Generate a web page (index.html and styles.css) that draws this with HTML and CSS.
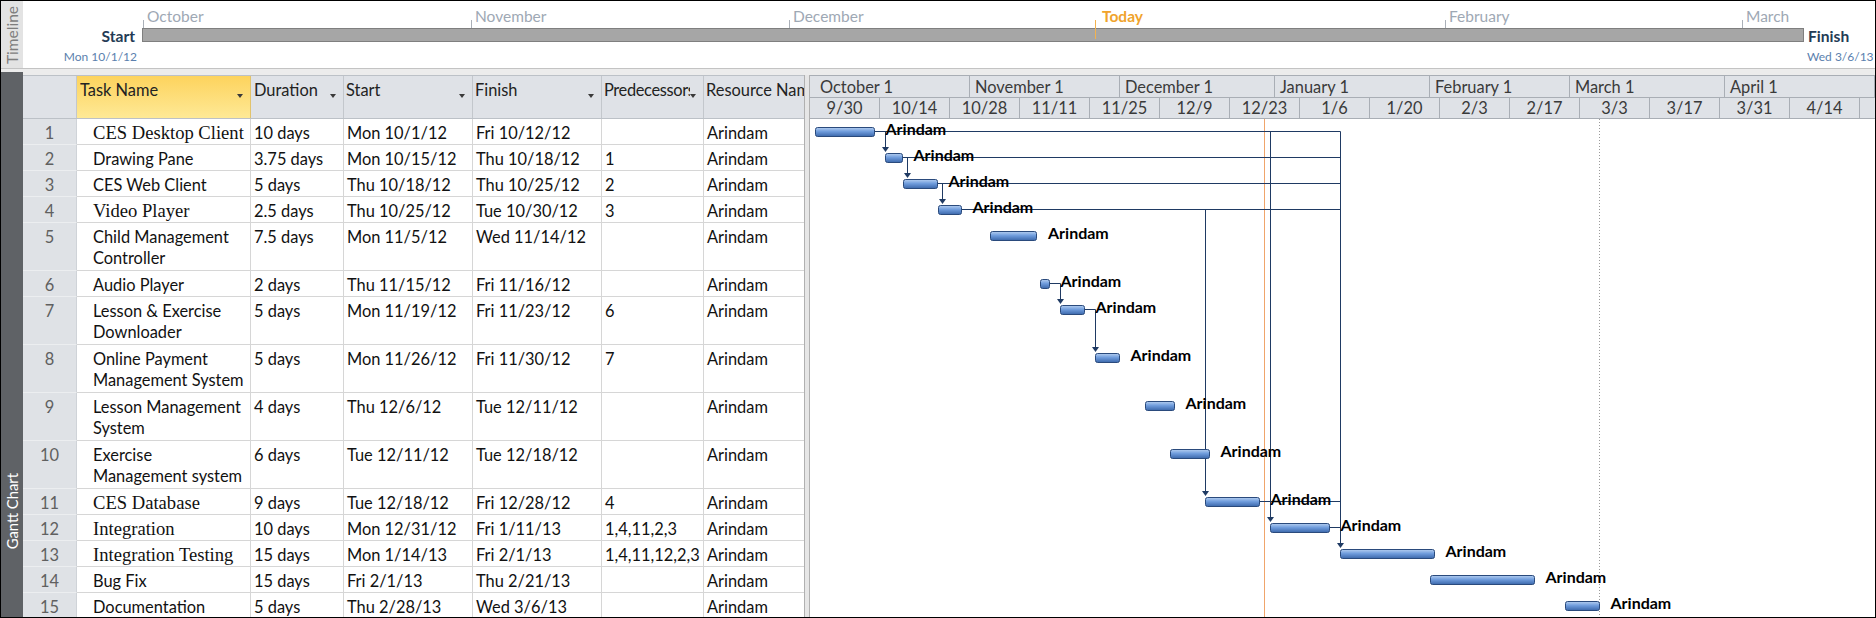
FILE: index.html
```html
<!DOCTYPE html>
<html>
<head>
<meta charset="utf-8">
<title>Gantt Chart</title>
<link rel="stylesheet" href="styles.css">
</head>
<body>
<div class="app">
  <div class="timeline">
    <div class="tl-side"><span>Timeline</span></div>
    <div class="tl-main">
      <div class="tl-months">
        <div class="tl-month" style="left:1px"><span>October</span></div>
        <div class="tl-month" style="left:329px"><span>November</span></div>
        <div class="tl-month" style="left:647px"><span>December</span></div>
        <div class="tl-month today" style="left:953px"><span>Today</span></div>
        <div class="tl-month" style="left:1303px"><span>February</span></div>
        <div class="tl-month" style="left:1600px"><span>March</span></div>
      </div>
      <div class="tl-start">Start</div>
      <div class="tl-bar"></div>
      <div class="tl-finish">Finish</div>
      <div class="tl-sdate">Mon 10/1/12</div>
      <div class="tl-fdate">Wed 3/6/13</div>
    </div>
  </div>
  <div class="sep"></div>
  <div class="gantt">
    <div class="g-side"><span>Gantt Chart</span></div>
    <div class="g-main">
      <div class="grid">
        <div class="thead">
          <div class="hc c-id"></div>
          <div class="hc c-name sel"><span class="ht">Task Name</span><i class="dd"></i></div>
          <div class="hc c-dur"><span class="ht">Duration</span><i class="dd"></i></div>
          <div class="hc c-start"><span class="ht">Start</span><i class="dd"></i></div>
          <div class="hc c-fin"><span class="ht">Finish</span><i class="dd"></i></div>
          <div class="hc c-pred"><span class="ht">Predecessors</span><i class="dd"></i></div>
          <div class="hc c-res"><span class="ht">Resource Names</span></div>
        </div>
        <div class="trow"><div class="tc c-id">1</div><div class="tc c-name serif">CES Desktop Client</div><div class="tc c-dur">10 days</div><div class="tc c-start">Mon 10/1/12</div><div class="tc c-fin">Fri 10/12/12</div><div class="tc c-pred"></div><div class="tc c-res">Arindam</div></div>
        <div class="trow"><div class="tc c-id">2</div><div class="tc c-name">Drawing Pane</div><div class="tc c-dur">3.75 days</div><div class="tc c-start">Mon 10/15/12</div><div class="tc c-fin">Thu 10/18/12</div><div class="tc c-pred">1</div><div class="tc c-res">Arindam</div></div>
        <div class="trow"><div class="tc c-id">3</div><div class="tc c-name">CES Web Client</div><div class="tc c-dur">5 days</div><div class="tc c-start">Thu 10/18/12</div><div class="tc c-fin">Thu 10/25/12</div><div class="tc c-pred">2</div><div class="tc c-res">Arindam</div></div>
        <div class="trow"><div class="tc c-id">4</div><div class="tc c-name serif">Video Player</div><div class="tc c-dur">2.5 days</div><div class="tc c-start">Thu 10/25/12</div><div class="tc c-fin">Tue 10/30/12</div><div class="tc c-pred">3</div><div class="tc c-res">Arindam</div></div>
        <div class="trow tall"><div class="tc c-id">5</div><div class="tc c-name">Child Management<br>Controller</div><div class="tc c-dur">7.5 days</div><div class="tc c-start">Mon 11/5/12</div><div class="tc c-fin">Wed 11/14/12</div><div class="tc c-pred"></div><div class="tc c-res">Arindam</div></div>
        <div class="trow"><div class="tc c-id">6</div><div class="tc c-name">Audio Player</div><div class="tc c-dur">2 days</div><div class="tc c-start">Thu 11/15/12</div><div class="tc c-fin">Fri 11/16/12</div><div class="tc c-pred"></div><div class="tc c-res">Arindam</div></div>
        <div class="trow tall"><div class="tc c-id">7</div><div class="tc c-name">Lesson &amp; Exercise<br>Downloader</div><div class="tc c-dur">5 days</div><div class="tc c-start">Mon 11/19/12</div><div class="tc c-fin">Fri 11/23/12</div><div class="tc c-pred">6</div><div class="tc c-res">Arindam</div></div>
        <div class="trow tall"><div class="tc c-id">8</div><div class="tc c-name">Online Payment<br>Management System</div><div class="tc c-dur">5 days</div><div class="tc c-start">Mon 11/26/12</div><div class="tc c-fin">Fri 11/30/12</div><div class="tc c-pred">7</div><div class="tc c-res">Arindam</div></div>
        <div class="trow tall"><div class="tc c-id">9</div><div class="tc c-name">Lesson Management<br>System</div><div class="tc c-dur">4 days</div><div class="tc c-start">Thu 12/6/12</div><div class="tc c-fin">Tue 12/11/12</div><div class="tc c-pred"></div><div class="tc c-res">Arindam</div></div>
        <div class="trow tall"><div class="tc c-id">10</div><div class="tc c-name">Exercise<br>Management system</div><div class="tc c-dur">6 days</div><div class="tc c-start">Tue 12/11/12</div><div class="tc c-fin">Tue 12/18/12</div><div class="tc c-pred"></div><div class="tc c-res">Arindam</div></div>
        <div class="trow"><div class="tc c-id">11</div><div class="tc c-name serif">CES Database</div><div class="tc c-dur">9 days</div><div class="tc c-start">Tue 12/18/12</div><div class="tc c-fin">Fri 12/28/12</div><div class="tc c-pred">4</div><div class="tc c-res">Arindam</div></div>
        <div class="trow"><div class="tc c-id">12</div><div class="tc c-name serif">Integration</div><div class="tc c-dur">10 days</div><div class="tc c-start">Mon 12/31/12</div><div class="tc c-fin">Fri 1/11/13</div><div class="tc c-pred">1,4,11,2,3</div><div class="tc c-res">Arindam</div></div>
        <div class="trow"><div class="tc c-id">13</div><div class="tc c-name serif">Integration Testing</div><div class="tc c-dur">15 days</div><div class="tc c-start">Mon 1/14/13</div><div class="tc c-fin">Fri 2/1/13</div><div class="tc c-pred">1,4,11,12,2,3</div><div class="tc c-res">Arindam</div></div>
        <div class="trow"><div class="tc c-id">14</div><div class="tc c-name">Bug Fix</div><div class="tc c-dur">15 days</div><div class="tc c-start">Fri 2/1/13</div><div class="tc c-fin">Thu 2/21/13</div><div class="tc c-pred"></div><div class="tc c-res">Arindam</div></div>
        <div class="trow"><div class="tc c-id">15</div><div class="tc c-name">Documentation</div><div class="tc c-dur">5 days</div><div class="tc c-start">Thu 2/28/13</div><div class="tc c-fin">Wed 3/6/13</div><div class="tc c-pred"></div><div class="tc c-res">Arindam</div></div>
      </div>
      <div class="splitter"></div>
      <div class="chart">
        <div class="chead">
          <div class="tier-m">
            <div class="m-cell first" style="width:160px">October 1</div>
            <div class="m-cell" style="width:150px">November 1</div>
            <div class="m-cell" style="width:155px">December 1</div>
            <div class="m-cell" style="width:155px">January 1</div>
            <div class="m-cell" style="width:140px">February 1</div>
            <div class="m-cell" style="width:155px">March 1</div>
            <div class="m-cell" style="width:150px">April 1</div>
          </div>
          <div class="tier-w">
            <div class="w-cell">9/30</div><div class="w-cell">10/14</div><div class="w-cell">10/28</div><div class="w-cell">11/11</div><div class="w-cell">11/25</div><div class="w-cell">12/9</div><div class="w-cell">12/23</div><div class="w-cell">1/6</div><div class="w-cell">1/20</div><div class="w-cell">2/3</div><div class="w-cell">2/17</div><div class="w-cell">3/3</div><div class="w-cell">3/17</div><div class="w-cell">3/31</div><div class="w-cell">4/14</div><div class="w-cell"></div>
          </div>
        </div>
        <div class="cbody">
          <svg class="gsvg" width="1065" height="500" viewBox="0 0 1065 500">
            <defs>
              <linearGradient id="barfill" x1="0" y1="0" x2="0" y2="1">
                <stop offset="0" stop-color="#b4cef0"/>
                <stop offset="0.45" stop-color="#6f9cdc"/>
                <stop offset="1" stop-color="#3b67aa"/>
              </linearGradient>
            </defs>
            <line class="today-line" x1="454.5" y1="0" x2="454.5" y2="500"/>
            <line class="finish-line" x1="789.5" y1="0" x2="789.5" y2="500"/>
            <g class="links">
              <path d="M65 12.5 H530.5 V424"/>
              <path d="M75.5 12.5 V28"/>
              <path d="M460.5 12.5 V398"/>
              <path d="M93 38.5 H530.5"/>
              <path d="M97.5 38.5 V54"/>
              <path d="M128 64.5 H530.5"/>
              <path d="M132.5 64.5 V80"/>
              <path d="M152 90.5 H530.5"/>
              <path d="M395.5 90.5 V372"/>
              <path d="M240 164.5 H250.5 V180"/>
              <path d="M275 190.5 H285.5 V228"/>
              <path d="M450 382.5 H530.5"/>
              <path d="M520 408.5 H530.5"/>
            </g>
            <g class="arrows">
              <polygon points="72,28 79,28 75.5,33"/>
              <polygon points="94,54 101,54 97.5,59"/>
              <polygon points="129,80 136,80 132.5,85"/>
              <polygon points="247,180 254,180 250.5,185"/>
              <polygon points="282,228 289,228 285.5,233"/>
              <polygon points="392,372 399,372 395.5,377"/>
              <polygon points="457,398 464,398 460.5,403"/>
              <polygon points="527,424 534,424 530.5,429"/>
            </g>
            <g class="bars">
              <rect x="5.5" y="8.5" width="59" height="9" rx="2"/>
              <rect x="75.5" y="34.5" width="17" height="9" rx="2"/>
              <rect x="93.5" y="60.5" width="34" height="9" rx="2"/>
              <rect x="128.5" y="86.5" width="23" height="9" rx="2"/>
              <rect x="180.5" y="112.5" width="46" height="9" rx="2"/>
              <rect x="230.5" y="160.5" width="9" height="9" rx="2"/>
              <rect x="250.5" y="186.5" width="24" height="9" rx="2"/>
              <rect x="285.5" y="234.5" width="24" height="9" rx="2"/>
              <rect x="335.5" y="282.5" width="29" height="9" rx="2"/>
              <rect x="360.5" y="330.5" width="39" height="9" rx="2"/>
              <rect x="395.5" y="378.5" width="54" height="9" rx="2"/>
              <rect x="460.5" y="404.5" width="59" height="9" rx="2"/>
              <rect x="530.5" y="430.5" width="94" height="9" rx="2"/>
              <rect x="620.5" y="456.5" width="104" height="9" rx="2"/>
              <rect x="755.5" y="482.5" width="34" height="9" rx="2"/>
            </g>
            <g class="blabels">
              <text x="75.5" y="16">Arindam</text>
              <text x="103.5" y="42">Arindam</text>
              <text x="138.5" y="68">Arindam</text>
              <text x="162.5" y="94">Arindam</text>
              <text x="238" y="120">Arindam</text>
              <text x="250.5" y="168">Arindam</text>
              <text x="285.5" y="194">Arindam</text>
              <text x="320.5" y="242">Arindam</text>
              <text x="375.5" y="290">Arindam</text>
              <text x="410.5" y="338">Arindam</text>
              <text x="460.5" y="386">Arindam</text>
              <text x="530.5" y="412">Arindam</text>
              <text x="635.5" y="438">Arindam</text>
              <text x="735.5" y="464">Arindam</text>
              <text x="800.5" y="490">Arindam</text>
            </g>
          </svg>
        </div>
      </div>
    </div>
  </div>
</div>
</body>
</html>
```

FILE: styles.css
```css
html, body {
  margin: 0;
  padding: 0;
}
body {
  width: 1876px;
  height: 618px;
  overflow: hidden;
  background: #fff;
  font-family: Lato, "Liberation Sans", sans-serif;
}
.app {
  box-sizing: border-box;
  width: 1876px;
  height: 618px;
  border: 1px solid #000;
  display: flex;
  flex-direction: column;
  overflow: hidden;
  background: #fff;
}

/* ---------- timeline ---------- */
.timeline {
  flex: none;
  height: 67px;
  border-bottom: 1px solid #c3c3c3;
  display: flex;
}
.tl-side {
  width: 22px;
  flex: none;
  background: #e3e3e3;
  display: flex;
  align-items: center;
  justify-content: center;
}
.tl-side span {
  writing-mode: vertical-rl;
  transform: rotate(180deg);
  font-size: 15.5px;
  color: #7d7d7d;
  white-space: nowrap;
}
.tl-main {
  flex: 1;
  display: grid;
  grid-template-columns: 119px 1662px 1fr;
  grid-template-rows: 27px 14px 1fr;
}
.tl-months {
  grid-column: 2;
  grid-row: 1;
  position: relative;
}
.tl-month {
  position: absolute;
  bottom: 0;
  height: 8px;
  border-left: 1px solid #aab0b8;
  z-index: 1;
}
.tl-month span {
  position: absolute;
  left: 3px;
  bottom: 3px;
  font-size: 15.5px;
  line-height: 18px;
  color: #9ea8b4;
  white-space: nowrap;
}
.tl-month.today {
  height: 19px;
  bottom: -11px;
  border-left-color: #f3b24f;
}
.tl-month.today span {
  bottom: 14px;
  left: 6px;
  color: #f0a32b;
  font-weight: 700;
}
.tl-start {
  grid-column: 1;
  grid-row: 2;
  text-align: right;
  padding-right: 7px;
  font-weight: 700;
  font-size: 15.6px;
  line-height: 16px;
  color: #243b55;
}
.tl-bar {
  grid-column: 2;
  grid-row: 2;
  box-sizing: border-box;
  background: #a6a6a6;
  border: 1px solid #7f7f7f;
}
.tl-finish {
  grid-column: 3;
  grid-row: 2;
  padding-left: 4px;
  font-weight: 700;
  font-size: 15.6px;
  line-height: 16px;
  color: #243b55;
}
.tl-sdate,
.tl-fdate {
  grid-row: 3;
  margin-top: 7px;
  font-size: 12px;
  line-height: 16px;
  color: #5b7fae;
  white-space: nowrap;
}
.tl-sdate {
  grid-column: 1;
  text-align: right;
  padding-right: 5px;
}
.tl-fdate {
  grid-column: 3;
  padding-left: 3px;
}
.sep {
  flex: none;
  height: 3px;
  background: #ececec;
}

/* ---------- gantt ---------- */
.gantt {
  flex: 1;
  min-height: 0;
  display: flex;
  overflow: hidden;
}
.g-side {
  width: 22px;
  flex: none;
  background: #5f6266;
  display: flex;
  align-items: flex-end;
  justify-content: center;
  padding-bottom: 68px;
  box-sizing: border-box;
}
.g-side span {
  writing-mode: vertical-rl;
  transform: rotate(180deg);
  color: #fff;
  font-size: 14.8px;
  white-space: nowrap;
}
.g-main {
  flex: 1;
  min-width: 0;
  display: flex;
  padding-top: 3px;
  background: #ececec;
}
.grid {
  width: 781px;
  flex: none;
  display: flex;
  flex-direction: column;
  background: #fff;
}
.thead {
  flex: none;
  height: 44px;
  box-sizing: border-box;
  border-top: 1px solid #bcc1c7;
  border-bottom: 1px solid #bcc1c7;
  background: #dfe2e7;
  display: flex;
}
.hc {
  box-sizing: border-box;
  height: 42px;
  border-right: 1px solid #c3c7cc;
  display: flex;
  align-items: flex-start;
  padding: 3px 7px 0 2px;
  font-size: 16.4px;
  line-height: 21px;
  color: #222;
  overflow: hidden;
  white-space: nowrap;
}
.hc.c-name, .hc.c-dur { padding-left: 3px; }
.hc.c-res { border-right: none; padding-right: 0; }
.hc.c-pred .ht { letter-spacing: -0.35px; }
.hc.c-pred .dd { margin-left: 0; }
.hc.sel {
  background: linear-gradient(#fdd35d, #fee996);
  border-right-color: #e2c36c;
}
.ht {
  flex: 1;
  min-width: 0;
  overflow: hidden;
}
.dd {
  flex: none;
  width: 0;
  height: 0;
  margin-top: 15px;
  margin-left: 2px;
  border-left: 3.5px solid transparent;
  border-right: 3.5px solid transparent;
  border-top: 4px solid #3a3a3a;
}
.c-id { width: 54px; }
.c-name { width: 174px; }
.c-dur { width: 93px; }
.c-start { width: 129px; }
.c-fin { width: 129px; }
.c-pred { width: 102px; }
.c-res { width: 100px; }

.trow {
  flex: none;
  height: 26px;
  display: flex;
}
.trow.tall { height: 48px; }
.tc {
  box-sizing: border-box;
  height: 100%;
  flex: none;
  border-right: 1px solid #d6d6d6;
  border-bottom: 1px solid #d6d6d6;
  padding: 3px 0 0 3px;
  font-size: 16.4px;
  line-height: 21px;
  color: #111;
  white-space: nowrap;
  overflow: hidden;
}
.tc.c-res { border-right: none; }
.tc.c-id {
  background: #dfe2e6;
  border-bottom-color: #eceef0;
  border-right-color: #cfd3d8;
  text-align: center;
  padding-left: 0;
  color: #606060;
}
.tc.c-name { padding-left: 16px; }
.tc.serif {
  font-family: "Liberation Serif", serif;
  font-size: 18.6px;
}

.splitter {
  width: 6px;
  flex: none;
  box-sizing: border-box;
  border-left: 1px solid #b0b0b0;
  border-right: 1px solid #b0b0b0;
  background: #e6e6e6;
}
.chart {
  flex: 1;
  min-width: 0;
  display: flex;
  flex-direction: column;
  background: #fff;
}
.chead {
  flex: none;
  height: 44px;
  box-sizing: border-box;
  border-top: 1px solid #a9aeb5;
  border-bottom: 1px solid #a9aeb5;
  background: #dfe2e7;
  display: flex;
  flex-direction: column;
  overflow: hidden;
}
.tier-m {
  height: 22px;
  box-sizing: border-box;
  border-bottom: 1px solid #a9aeb5;
  display: flex;
}
.tier-w {
  height: 20px;
  display: flex;
}
.m-cell {
  flex: none;
  box-sizing: border-box;
  border-right: 1px solid #a9aeb5;
  padding-left: 5px;
  font-size: 16.4px;
  line-height: 21px;
  color: #3a3a3a;
  white-space: nowrap;
  overflow: hidden;
}
.m-cell.first { padding-left: 10px; }
.w-cell {
  flex: none;
  width: 70px;
  box-sizing: border-box;
  border-right: 1px solid #a9aeb5;
  text-align: center;
  font-size: 16.4px;
  line-height: 20px;
  color: #3a3a3a;
}
.cbody {
  flex: 1;
  position: relative;
  overflow: hidden;
}
.gsvg {
  position: absolute;
  left: 0;
  top: 0;
}
.today-line {
  stroke: #f0a56b;
  stroke-width: 1;
}
.finish-line {
  stroke: #9a9a9a;
  stroke-width: 1;
  stroke-dasharray: 1 2;
}
.links path {
  fill: none;
  stroke: #1f3a63;
  stroke-width: 1;
}
.arrows polygon {
  fill: #1f3a63;
}
.bars rect {
  fill: url(#barfill);
  stroke: #2a4a7c;
  stroke-width: 1;
}
.blabels text {
  font-family: Lato, "Liberation Sans", sans-serif;
  font-weight: 700;
  font-size: 16px;
  fill: #000;
}
```
